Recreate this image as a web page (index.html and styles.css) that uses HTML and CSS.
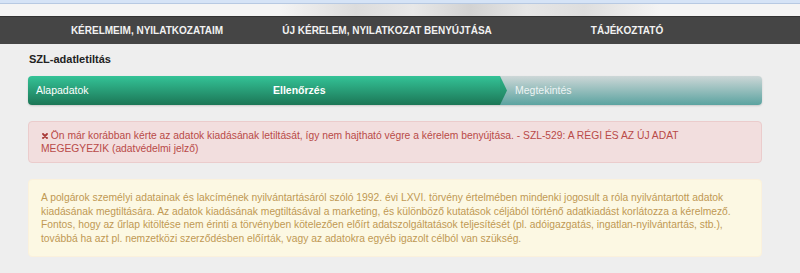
FILE: index.html
```html
<!DOCTYPE html>
<html lang="hu">

<head>
    <meta charset="UTF-8">
    <meta name="viewport" content="width=device-width, initial-scale=1.0">
    <title>SZL-adatletiltás</title>
    <link rel="stylesheet" href="styles.css">
</head>

<body>
    <div class="header">
        <div class="header-top"></div>
        <div class="header-banner"><div class="banner-art"></div></div>
    </div>

    <div class="mainnav">
        <a href="#">KÉRELMEIM, NYILATKOZATAIM</a>
        <a href="#">ÚJ KÉRELEM, NYILATKOZAT BENYÚJTÁSA</a>
        <a href="#">TÁJÉKOZTATÓ</a>
    </div>

    <div class="content">
        <h2 class="page-title">SZL-adatletiltás</h2>

        <div class="wizard">
            <div class="step done">Alapadatok</div>
            <div class="step active">Ellenőrzés</div>
            <div class="step todo">Megtekintés</div>
        </div>

        <div class="alert alert-error">
            <svg class="icon-remove" width="6" height="6" viewBox="0 0 6 6"><path d="M1 1L5 5M5 1L1 5" stroke="#a83a38" stroke-width="1.8" stroke-linecap="round" /></svg>
            Ön már korábban kérte az adatok kiadásának letiltását, így nem hajtható végre a kérelem benyújtása. - SZL-529: A RÉGI ÉS AZ ÚJ ADAT MEGEGYEZIK (adatvédelmi jelző)
        </div>

        <div class="alert alert-warning">
            A polgárok személyi adatainak és lakcímének nyilvántartásáról szóló 1992. évi LXVI. törvény értelmében mindenki jogosult a róla nyilvántartott adatok<br>
            kiadásának megtiltására. Az adatok kiadásának megtiltásával a marketing, és különböző kutatások céljából történő adatkiadást korlátozza a kérelmező.<br>
            Fontos, hogy az űrlap kitöltése nem érinti a törvényben kötelezően előírt adatszolgáltatások teljesítését (pl. adóigazgatás, ingatlan-nyilvántartás, stb.),<br>
            továbbá ha azt pl. nemzetközi szerződésben előírták, vagy az adatokra egyéb igazolt célból van szükség.
        </div>
    </div>
</body>

</html>
```

FILE: styles.css
```css
body {
    margin: 0;
    background-color: #eeeeee;
    font-family: "Liberation Sans", Arial, sans-serif;
    font-size: 11px;
    color: #333;
}

.header-top {
    height: 3px;
    background-color: #d5e3f6;
    border-bottom: 1px solid #b7c9e2;
}

.header-banner {
    height: 12px;
    background-color: #f4f4f4;
    overflow: hidden;
}

.banner-art {
    margin-left: 280px;
    width: 380px;
    height: 12px;
    background: linear-gradient(90deg, rgba(244, 244, 244, 0) 0%, #dcdcdc 20%, #e8e8e8 35%, #d2d2d2 50%, #e6e6e6 65%, #dedede 80%, rgba(244, 244, 244, 0) 100%);
}

.mainnav {
    height: 28px;
    background-color: #454545;
    border-top: 1px solid #333;
    box-sizing: border-box;
    display: flex;
    padding-left: 27px;
}

.mainnav a {
    width: 240px;
    text-align: center;
    color: #f2f2f2;
    text-decoration: none;
    font-weight: bold;
    font-size: 10px;
    line-height: 27px;
}

.content {
    margin-left: 28px;
    width: 734px;
}

.page-title {
    font-size: 11px;
    font-weight: bold;
    color: #222;
    margin: 0;
    padding: 9px 0 0 1px;
    height: 23px;
    box-sizing: border-box;
}

.wizard {
    display: flex;
    height: 29px;
    margin-top: 9px;
    border-radius: 4px;
    overflow: hidden;
    box-shadow: 0 1px 2px rgba(0, 0, 0, 0.15);
}

.step {
    line-height: 29px;
    color: #fff;
    font-size: 10.5px;
    padding-left: 8px;
    box-sizing: border-box;
}

.step.done {
    width: 237px;
    background: linear-gradient(#34c397, #1c7656);
}

.step.active {
    width: 235px;
    font-weight: bold;
    background: linear-gradient(#34c397, #1c7656);
    position: relative;
}

.step.active::after {
    content: "";
    position: absolute;
    right: -7px;
    top: 0;
    width: 7px;
    height: 29px;
    background: linear-gradient(#2fb78c, #1e7a5a);
    clip-path: polygon(0 0, 100% 50%, 0 100%);
    z-index: 1;
}

.step.todo {
    flex: 1;
    padding-left: 15px;
    background: linear-gradient(#cdd7d7, #5ba3a0);
    color: #eef4f4;
}

.alert {
    margin-top: 16px;
    padding: 7px 35px 7px 12px;
    border-radius: 4px;
    line-height: 13px;
    font-size: 10.3px;
}

.alert-error {
    background-color: #f2dede;
    color: #b94a48;
    border: 1px solid #ebcccc;
}

.icon-remove {
    vertical-align: 0;
    margin-left: 1px;
}

.alert-warning {
    padding: 11px 8px 10px 12px;
    line-height: 13.7px;
    background-color: #fcf8e3;
    color: #c09853;
    border: 1px solid #fbf1dc;
}
```
